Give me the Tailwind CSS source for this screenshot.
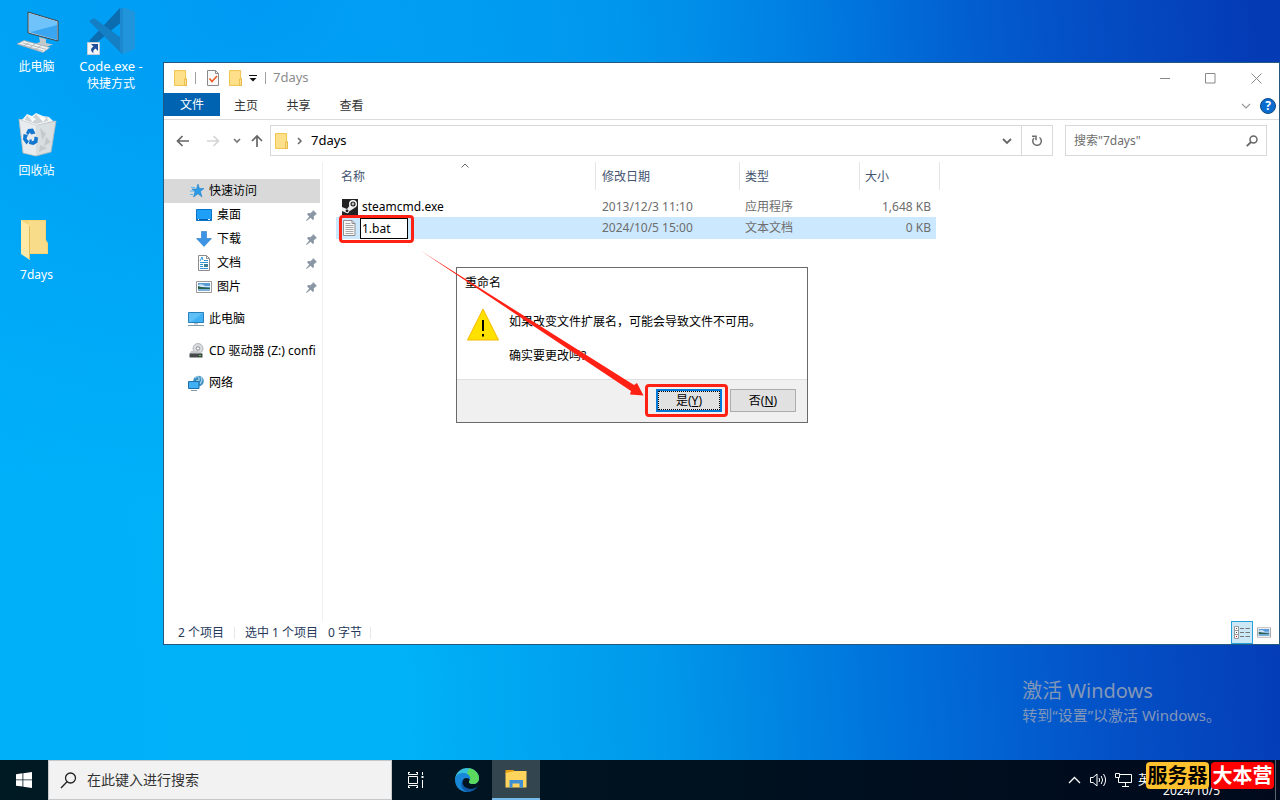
<!DOCTYPE html>
<html lang="zh-CN">
<head>
  <meta charset="UTF-8" />
  <meta name="viewport" content="width=device-width, initial-scale=1.0" />
  <title>7days</title>
  <script src="https://cdn.jsdelivr.net/npm/@tailwindcss/browser@4"></script>
</head>
<body class="font-['Noto_Sans','Noto_Sans_CJK_SC',sans-serif] text-xs text-black">

<!-- shared icons -->
<svg class="hidden">
  <symbol id="folder" viewBox="0 0 14 17">
    <path d="M.5.5h12v9h1v7H.5z" fill="#ffe08a" stroke="#eec043"/>
    <path d="M11.500 9.500h2v7h-2z" fill="#ffe9a8" stroke="#e5b63b"/>
  </symbol>
  <symbol id="pin" viewBox="0 0 11 11">
    <path d="M7 0l4 4-1.200.4-2 2.200.2 2.400-1.200 1L4.600 7.800.6 11 0 10.400 3.200 6.400 1 4.200l1-1.200 2.400.2 2.200-2z" fill="#8a98a5"/>
  </symbol>
  <symbol id="photo" viewBox="0 0 16 12">
    <path d="M.5.5h15v11H.5z" fill="#fff" stroke="#999"/>
    <path d="M2 2h12v8H2z" fill="#5b9bd8"/>
    <path d="M2 4q4-2 7 1h5v1H2z" fill="#cfe6f8"/>
    <path d="M2 5l3 1 9 1v1H2z" fill="#2d5f4c"/>
    <path d="M2 8h12v2H2z" fill="#7fb2d9"/>
  </symbol>
</svg>

<div class="h-screen flex flex-col overflow-hidden">
  <main class="relative flex-1 min-h-0 bg-[radial-gradient(ellipse_at_20%_0%,#0094f2cc_0%,#0094f200_48%),linear-gradient(86deg,#00b0f9_0%,#00b3f8_30%,#0098ea_50%,#0070da_68%,#0450c6_84%,#043bb5_98%)]">

    <!-- desktop icons -->
    <div class="flex text-white text-center leading-[17px]">
      <div class="w-[73px] flex flex-col">
        <a href="#" class="h-[104px] pt-2 flex flex-col items-center">
          <svg class="w-12 h-12" viewBox="0 0 48 48">
            <path d="M15 4l30 9v20l-30-8z" fill="#cfd6da" stroke="#38464f" stroke-width="1"/>
            <path d="M16 5.500l28 8.500v18l-28-8z" fill="#3aa6f2"/>
            <path d="M16 5.500l28 8.500v3L18 24l-2-.5z" fill="#6fc3fa"/>
            <path d="M26 29l7 2v4l7 1.500-7 2.500-11-3 5-2z" fill="#c3c8cb"/>
            <path d="M4 36l7-3.500 26 7-7 5z" fill="#eef1f2" stroke="#9aa3a8" stroke-width=".7"/>
            <path d="M7 36.500l23 6.500M10 35l23 6.300M10 38.500l6-4M16 40l6-4M22 42l6-4.500" stroke="#a8afb3" stroke-width=".8"/>
          </svg>
          <span class="pt-[2px]">此电脑</span>
        </a>
        <a href="#" class="h-[104px] pt-2 flex flex-col items-center">
          <svg class="w-12 h-12" viewBox="0 0 48 48">
            <path d="M6 7l37 2-5 31-15 4-13-3z" fill="#d9dee1"/>
            <path d="M6 7l17 6v31l-13-3z" fill="#e9ecee"/>
            <path d="M6 7l17 6 20-4-5 31-15 4-13-3z" fill="none" stroke="#aeb9bf" stroke-width=".8"/>
            <path d="M9 8l5-6 5 2 4-3 7 3 6 1 4 4-17 4z" fill="#f4f5f6"/>
            <path d="M14 3l4 5 5-6 5 6 6-4 1 5-12 3-11-4z" fill="#cdd2d5"/>
            <path d="M17 4l6 3-4 3zM27 5l6 1-3 4z" fill="#fff"/>
            <path d="M27 16l6 6-4 6zM33 25l5 5-7 4zM27 33l7 3-8 4z" fill="#c4c9cc"/>
            <path d="M13 21l2-4 5-.5 2.500 5-4.500 1-1-2-2 2.500zM10.500 22l4.500 1-1.500 3.500 2.500 3-2.500 3-3.500-5zM16.500 27.500l2.500 0-.5 2 2.500-1 .5-4 3.500 1-.5 5-4 2.500-4.500-1z" fill="#1377d0"/>
          </svg>
          <span class="pt-[2px]">回收站</span>
        </a>
        <a href="#" class="h-[104px] pt-2 flex flex-col items-center">
          <svg class="w-12 h-12" viewBox="0 0 48 48">
            <path d="M8 4h25v20l2 3v11H13z" fill="#f5d273"/>
            <path d="M15 5h17v19l2 3v10H15z" fill="#f8dc89"/>
            <path d="M8 4l9 6v34l-9-6z" fill="#ffe9a6"/>
            <path d="M16.500 10v33" stroke="#e4bd5a"/>
          </svg>
          <span class="pt-[2px]">7days</span>
        </a>
      </div>
      <a href="#" class="w-[76px] pt-2 flex flex-col items-center">
        <svg class="w-12 h-12" viewBox="0 0 48 48">
          <path d="M2 33l31-33 4 12L8 36z" fill="#0b6cb0"/>
          <path d="M2 13l5-3 30 22-2 14z" fill="#147fc4"/>
          <path d="M36 -1l12 5v37l-12 5z" fill="#2095dc"/>
          <path d="M33 2l3-3v47l-3-3z" fill="#1b88cf"/>
          <path d="M.5 34.500h12v12H.500z" fill="#f4f6fa" stroke="#c5ccd6"/>
          <path d="M4 36h7v7L8.500 40.500Q5.500 42 6.500 45.500 1.500 41.500 6.500 38.500z" fill="#1f4f9a"/>
        </svg>
        <span class="pt-[2px] text-[13px]">Code.exe -</span>
        <span>快捷方式</span>
      </a>
    </div>

    <p class="absolute right-[59px] bottom-[35px] text-[#8297b8]">
      <span class="block text-xl leading-7">激活 Windows</span>
      <span class="block text-[15px] leading-5">转到“设置”以激活 Windows。</span>
    </p>

    <!-- explorer window -->
    <section class="absolute left-[163px] right-0 top-[62px] bottom-[115px] flex flex-col bg-white border border-[#24597f]">
      <div class="h-[30px] shrink-0 flex items-center pl-[10px] text-[#8c8c8c]">
        <svg class="w-[13px] h-4"><use href="#folder"/></svg>
        <i class="ml-2 w-px h-3 bg-[#a0a0a0]"></i>
        <svg class="ml-[11px] w-3 h-4" viewBox="0 0 12 16">
          <path d="M.5.500h8l3 3v12H.5z" fill="#fafafa" stroke="#8a8a8a"/>
          <path d="M8.500.500v3h3" fill="none" stroke="#8a8a8a"/>
          <path d="M2.500 8.500l2.500 3 5-5.500" fill="none" stroke="#ee5a24" stroke-width="1.600"/>
        </svg>
        <svg class="ml-[10px] w-[13px] h-4"><use href="#folder"/></svg>
        <svg class="ml-[7px] w-2 h-2" viewBox="0 0 8 8"><path d="M0 1.500h8" stroke="#111"/><path d="M.5 4h7L4 7.500z" fill="#111"/></svg>
        <i class="ml-2 w-px h-3 bg-[#a0a0a0]"></i>
        <span class="ml-[7px] text-[13px]">7days</span>
        <div class="ml-auto flex">
          <button aria-label="最小化" class="w-[46px] h-7 grid place-items-center"><svg class="w-[11px] h-[11px]" viewBox="0 0 11 11"><path d="M0 5.500h10" stroke="#888"/></svg></button>
          <button aria-label="最大化" class="w-[45px] h-7 grid place-items-center"><svg class="w-[11px] h-[11px]" viewBox="0 0 11 11"><path d="M.5.500h9.500v9.500H.5z" fill="none" stroke="#888"/></svg></button>
          <button aria-label="关闭" class="w-[46px] h-7 grid place-items-center"><svg class="w-[11px] h-[11px]" viewBox="0 0 11 11"><path d="M.5.500l10 10M10.500.500l-10 10" stroke="#888"/></svg></button>
        </div>
      </div>

      <nav class="h-[27px] shrink-0 flex items-start border-b border-[#dadbdc] leading-[25px] text-[#333]">
        <a href="#" class="w-14 bg-[#0063b1] text-white text-center leading-[23px]">文件</a>
        <a href="#" class="w-[52px] text-center">主页</a>
        <a href="#" class="w-[53px] text-center">共享</a>
        <a href="#" class="w-[53px] text-center">查看</a>
        <div class="ml-auto pt-[5px] pr-[3px] flex items-center gap-[9px]">
          <svg class="w-[10px] h-2" viewBox="0 0 10 8"><path d="M1 2l4 4 4-4" fill="none" stroke="#999" stroke-width="1.200"/></svg>
          <button aria-label="帮助" class="w-4 h-4 rounded-full border border-[#0b4a87] bg-[#0a6cce] text-white font-bold leading-[14px]">?</button>
        </div>
      </nav>

      <div class="h-[41px] shrink-0 flex items-center pl-3 pr-3">
        <svg class="w-[14px] h-3" viewBox="0 0 14 12"><path d="M1.500 6H13M6.500 1l-5 5 5 5" fill="none" stroke="#666" stroke-width="1.700"/></svg>
        <svg class="ml-4 w-[14px] h-3" viewBox="0 0 14 12"><path d="M1 6h11.500M7.500 1l5 5-5 5" fill="none" stroke="#d5d5d5" stroke-width="1.700"/></svg>
        <svg class="ml-[13px] w-2 h-2" viewBox="0 0 8 8"><path d="M1 2l3 3 3-3" fill="none" stroke="#777" stroke-width="1.700"/></svg>
        <svg class="ml-[10px] w-3 h-[14px]" viewBox="0 0 12 14"><path d="M6 13V2M1 7l5-5 5 5" fill="none" stroke="#666" stroke-width="1.700"/></svg>
        <div class="ml-[7px] h-[31px] flex-1 flex items-center border border-[#d9d9d9] pl-1">
          <svg class="w-[13px] h-4"><use href="#folder"/></svg>
          <svg class="ml-[9px] w-[6px] h-2" viewBox="0 0 6 8"><path d="M1 1l3 3-3 3" fill="none" stroke="#666" stroke-width="1.500"/></svg>
          <span class="ml-2 text-[13px]">7days</span>
          <svg class="ml-auto mr-[9px] w-[10px] h-2" viewBox="0 0 10 8"><path d="M1 2l4 4 4-4" fill="none" stroke="#666" stroke-width="1.800"/></svg>
          <button aria-label="刷新" class="w-[31px] h-full border-l border-[#d9d9d9] grid place-items-center">
            <svg class="w-3 h-3" viewBox="0 0 12 12"><path d="M8.500 2.500a4.300 4.300 0 1 1-5.500.5M1 1.200h4v4" fill="none" stroke="#6b6b6b" stroke-width="1.500"/></svg>
          </button>
        </div>
        <label class="ml-3 h-[31px] w-[202px] flex items-center border border-[#d9d9d9] px-2">
          <input type="text" aria-label="搜索" placeholder="搜索&quot;7days&quot;" class="flex-1 min-w-0 outline-none placeholder:text-[#6d6d6d]" />
          <svg class="w-3 h-3" viewBox="0 0 12 12"><circle cx="7.500" cy="4.500" r="3.500" fill="none" stroke="#666" stroke-width="1.500"/><path d="M5 7L.8 11.200" stroke="#666" stroke-width="1.800"/></svg>
        </label>
      </div>

      <div class="flex-1 min-h-0 flex pt-px">
        <!-- navigation pane -->
        <aside class="w-[159px] shrink-0 border-r border-[#f0f0f0] pt-[17px] pr-[2px] leading-6 whitespace-nowrap">
          <a href="#" class="h-6 pl-[26px] flex items-center gap-[5px] bg-[#d9d9d9]">
            <svg class="w-[14px] h-[14px]" viewBox="0 0 14 14"><path d="M8 0l1.500 4.500H14l-3.600 3L12 13 8 9.800 3.500 13 5 7.800 2 5h4.500z" fill="#2b9be6" stroke="#1878c0" stroke-width=".5"/><path d="M1 3.500h4M0 7h4M0 10.500h3" stroke="#5fb8f2"/></svg>
            快速访问
          </a>
          <a href="#" class="h-6 pl-8 pr-[3px] flex items-center gap-[5px]">
            <svg class="w-4 h-4" viewBox="0 0 16 16"><path d="M.5 2.500h15v11H.5z" fill="#1fa0f8" stroke="#0b72c8"/><path d="M1 12.500h14" stroke="#045fae"/><path d="M2 12.500h1M12 12.500h2" stroke="#fff"/></svg>
            桌面
            <svg class="ml-auto w-[11px] h-[11px]"><use href="#pin"/></svg>
          </a>
          <a href="#" class="h-6 pl-8 pr-[3px] flex items-center gap-[5px]">
            <svg class="w-4 h-4" viewBox="0 0 16 16"><path d="M5.500.500h5v7h5L8 15.500.500 7.500h5z" fill="#3d94e4" stroke="#2a7ac8" stroke-width=".6"/></svg>
            下载
            <svg class="ml-auto w-[11px] h-[11px]"><use href="#pin"/></svg>
          </a>
          <a href="#" class="h-6 pl-8 pr-[3px] flex items-center gap-[5px]">
            <svg class="w-4 h-4" viewBox="0 0 16 16"><path d="M2.500.500h8l3 3v12h-11z" fill="#fff" stroke="#8c8c8c"/><path d="M10.500.500v3h3" fill="none" stroke="#8c8c8c"/><path d="M8 5.500h4M4 7.500h8M4 9.500h3M4 11.500h3M4 13.500h8" stroke="#2f95d8"/><path d="M4 6l2-4 1 3" stroke="#2f95d8" fill="none"/><path d="M8 9h4v3H8z" fill="#3a7f95"/></svg>
            文档
            <svg class="ml-auto w-[11px] h-[11px]"><use href="#pin"/></svg>
          </a>
          <a href="#" class="h-6 pl-8 pr-[3px] flex items-center gap-[5px]">
            <svg class="w-4 h-3"><use href="#photo"/></svg>
            图片
            <svg class="ml-auto w-[11px] h-[11px]"><use href="#pin"/></svg>
          </a>
          <a href="#" class="mt-2 h-6 pl-6 flex items-center gap-[5px]">
            <svg class="w-4 h-4" viewBox="0 0 16 16"><path d="M.5 1.500h15v10H.5z" fill="#3fb0f4" stroke="#2a7fb8"/><path d="M1 2h14L3 11H1z" fill="#5fc0f8"/><path d="M6 12h4v1.500H6z" fill="#b5c3cc"/><path d="M0 14.500h16" stroke="#7f98aa"/></svg>
            此电脑
          </a>
          <a href="#" class="mt-2 h-6 pl-6 flex items-center gap-[5px] overflow-hidden">
            <svg class="w-4 h-4 shrink-0" viewBox="0 0 16 16"><circle cx="10" cy="5.500" r="5" fill="#d8dcde" stroke="#a5a9ab" stroke-width=".8"/><circle cx="10" cy="5.500" r="1.700" fill="#fff" stroke="#8b8f91"/><path d="M3 8h7l4 2v1H1.500z" fill="#c4c7c9"/><path d="M1.500 10.500h13v4h-13z" fill="#45494b"/><path d="M11 12.500h2" stroke="#4fd24a"/></svg>
            <span>CD 驱动器 (Z:) confi</span>
          </a>
          <a href="#" class="mt-2 h-6 pl-6 flex items-center gap-[5px]">
            <svg class="w-4 h-4" viewBox="0 0 16 16"><circle cx="10.500" cy="6" r="5.300" fill="#3b8fc0"/><path d="M7 3q3-3 4 0t-3 3M13 2l1 3-2 4" stroke="#a9d6ea" fill="none" stroke-width="1.200"/><path d="M.5 6.500h10.500v7H.500z" fill="#3fb0f4" stroke="#1f6fa8"/><path d="M3 15.500h6" stroke="#7f98aa"/></svg>
            网络
          </a>
        </aside>

        <!-- file list -->
        <div class="relative flex-1 pl-[13px]">
          <svg class="absolute left-[138px] top-px w-2 h-[5px]" viewBox="0 0 8 5"><path d="M.5 4.500L4 1l3.500 3.500" fill="none" stroke="#666"/></svg>
          <table class="w-[604px] table-fixed border-separate border-spacing-0 text-[#6d6d6d]">
            <thead>
              <tr class="h-7 text-left text-[#44546f]">
                <th class="w-[260px] p-0 pt-[2px] pl-[5px] font-normal border-r border-[#e5e5e5]">名称</th>
                <th class="w-36 p-0 pt-[2px] pl-[6px] font-normal border-r border-[#e5e5e5]">修改日期</th>
                <th class="w-[120px] p-0 pt-[2px] pl-[5px] font-normal border-r border-[#e5e5e5]">类型</th>
                <th class="w-20 p-0 pt-[2px] pl-[5px] font-normal border-r border-[#e5e5e5]">大小</th>
              </tr>
            </thead>
            <tbody>
              <tr class="h-[6px]"><td colspan="4"></td></tr>
              <tr class="h-[21px]">
                <td class="p-0 pl-[6px] text-black">
                  <div class="flex items-center gap-1">
                    <svg class="w-4 h-4" viewBox="0 0 16 16"><path d="M0 0h16v16H0z" fill="#222"/><circle cx="11" cy="5" r="3.300" fill="none" stroke="#fff" stroke-width="1.400"/><circle cx="11" cy="5" r="1.400" fill="#bbb"/><path d="M0 8l5 2 3-4 4.500 3-5.500 3.500Q7 15 4.500 14L0 12z" fill="#eee"/><circle cx="5" cy="11.800" r="1.400" fill="#222"/></svg>
                    steamcmd.exe
                  </div>
                </td>
                <td class="p-0 pl-[6px]">2013/12/3 11:10</td>
                <td class="p-0 pl-[5px]">应用程序</td>
                <td class="p-0 pr-[5px] text-right border-r-4 border-white">1,648 KB</td>
              </tr>
              <tr class="h-[22px] bg-[#cce8ff]">
                <td class="p-0 pl-[7px]">
                  <div class="flex items-center gap-1">
                    <svg class="w-[13px] h-4" viewBox="0 0 13 16"><path d="M.5.500h8.500l3 3v12H.5z" fill="#f7f7f7" stroke="#8f8f8f"/><path d="M9 .5v3h3" fill="none" stroke="#8f8f8f"/><path d="M2.500 3.500h5M2.500 5.500h8M2.500 7.500h8M2.500 9.500h8M2.500 11.500h8M2.500 13.500h8" stroke="#a9a9a9"/></svg>
                    <input type="text" aria-label="文件名" value="1.bat" class="w-12 h-[21px] pl-px bg-white border border-black text-black outline-none" />
                  </div>
                </td>
                <td class="p-0 pl-[6px]">2024/10/5 15:00</td>
                <td class="p-0 pl-[5px]">文本文档</td>
                <td class="p-0 pr-[5px] text-right border-r-4 border-white">0 KB</td>
              </tr>
            </tbody>
          </table>
        </div>
      </div>

      <footer class="h-[23px] shrink-0 flex items-center pl-[14px] pr-2 text-[#26395b]">
        <span>2 个项目</span>
        <i class="mx-[10px] w-px h-3 bg-[#e8e8e8]"></i>
        <span>选中 1 个项目</span>
        <span class="ml-[10px]">0 字节</span>
        <i class="ml-2 w-px h-3 bg-[#e8e8e8]"></i>
        <button aria-label="详细信息" class="ml-auto w-[22px] h-[23px] border border-[#26a0da] bg-[#cbe8f6] grid place-items-center">
          <svg class="w-4 h-[13px]" viewBox="0 0 16 13"><path d="M.5.500h4v12h-4zM.5 4.500h4M.5 8.500h4" fill="#fff" stroke="#999"/><path d="M2 2.500h1M2 6.500h1" stroke="#555"/><path d="M2 10.500h1" stroke="#c00"/><path d="M6 2.500h4M11.500 2.500H16M6 6.500h4M11.500 6.500H16M6 10.500h4M11.500 10.500H16" stroke="#777"/></svg>
        </button>
        <button aria-label="大图标" class="ml-1"><svg class="w-[14px] h-[11px]" viewBox="0 0 16 12"><use href="#photo"/></svg></button>
      </footer>
    </section>

    <!-- rename dialog -->
    <section role="dialog" class="absolute left-[456px] top-[267px] w-[352px] flex flex-col bg-white border border-[#6a6a6a]">
      <h1 class="h-[30px] pl-2 leading-[30px]">重命名</h1>
      <div class="h-[81px] pl-[10px] pt-[10px] flex gap-[10px]">
        <svg class="w-8 h-[33px]" viewBox="0 0 32 33"><path d="M16 1l15.500 31H.5z" fill="#ffe100" stroke="#f6b800"/><path d="M15 12h2v11h-2zM15 26h2v2.500h-2z" fill="#000"/></svg>
        <div class="pt-[5px] leading-[17px]">
          <p>如果改变文件扩展名，可能会导致文件不可用。</p>
          <p class="mt-[17px]">确实要更改吗?</p>
        </div>
      </div>
      <div class="h-[43px] flex justify-end gap-2 pt-[9px] pr-[11px] bg-[#f0f0f0] border-t border-[#dfdfdf]">
        <button class="w-[66px] h-[23px] border-2 border-[#0078d7] bg-[#e1e1e1]"><span class="block h-full border border-dotted border-black leading-[17px]">是(<u>Y</u>)</span></button>
        <button class="w-[66px] h-[23px] border border-[#adadad] bg-[#e1e1e1] leading-[21px]">否(<u>N</u>)</button>
      </div>
    </section>

    <!-- red markers -->
    <div class="absolute left-[339px] top-[215px] w-[75px] h-[28px] border-3 border-[#ff2114] rounded-sm"></div>
    <div class="absolute left-[645px] top-[384px] w-[83px] h-[33px] border-3 border-[#ff2114] rounded-sm"></div>
    <svg class="absolute left-[420px] top-[250px] w-[225px] h-[147px]" viewBox="0 0 225 147"><path d="M1 1L214 135 217 133 223.500 145.500 210 144.500 211 141z" fill="#ff2114"/></svg>
  </main>

  <!-- taskbar -->
  <footer class="relative h-10 shrink-0 flex bg-linear-to-r from-[#001a24] to-[#000a1c] text-white">
    <button aria-label="开始" class="w-12 grid place-items-center">
      <svg class="w-4 h-4" viewBox="0 0 16 16"><path d="M0 2.300L6.500 1.300v6.200H0zM7.300 1.200L16 0v7.500H7.300zM0 8.300h6.500v6.300L0 13.700zM7.300 8.300H16V16l-8.700-1.200z" fill="#fff"/></svg>
    </button>
    <label class="w-[344px] flex items-center gap-[10px] pl-[11px] bg-[#f2f2f2] border border-[#c4c8ca]">
      <svg class="w-[17px] h-[17px]" viewBox="0 0 17 17"><circle cx="10.500" cy="6" r="5" fill="none" stroke="#222" stroke-width="1.300"/><path d="M7 9.700L1 16" stroke="#222" stroke-width="1.300"/></svg>
      <input type="text" aria-label="搜索" placeholder="在此键入进行搜索" class="flex-1 min-w-0 text-sm outline-none placeholder:text-[#333]" />
    </label>
    <button aria-label="任务视图" class="w-12 grid place-items-center">
      <svg class="w-4 h-4" viewBox="0 0 16 16"><path d="M0 .5h2M8 .5h2M0 15.500h2M8 15.500h2M.5.500v2h9v-2M.5 15.500v-2h9v2M.5 4.500h9v7h-9zM14.500 0v3M14.500 8v8" fill="none" stroke="#fff"/><path d="M13.500 4h2v2h-2z" fill="#fff"/></svg>
    </button>
    <button aria-label="Edge" class="w-[54px] grid place-items-center">
      <svg class="w-6 h-6" viewBox="0 0 24 24">
        <path d="M0 11C1 4 6 0 12 0c7 0 12 5 12 10 0 4-3 6-6 6-3 0-4.500-1-4-2.500 2-2 .5-5.500-3-5.500z" fill="#36c0dc"/>
        <path d="M14 .2C20 1 24 5.500 24 10c0 4-3 6-6 6-3 0-4.500-1-4-2.500 2-2 1-6-2-8z" fill="#5bd75e"/>
        <path d="M0 12C0 7 5 4.500 9 5c5 .5 7 4 6 7-1-2-5-3-7 0-3 5 1 11 6 12C6 25 0 19 0 12z" fill="#1787d8"/>
        <path d="M8 12c-2 5 3 9 8 9 3 0 5-1 6.500-3C21 21.500 17 24 13 24 7 23 4 16 8 12z" fill="#0e59a8"/>
      </svg>
    </button>
    <button aria-label="文件资源管理器" class="-ml-[2px] w-12 bg-[#33454f] border-b-2 border-[#76b9ed] grid place-items-center">
      <svg class="w-[22px] h-[18px]" viewBox="0 0 22 18"><path d="M.5 0h8l1.500 2v2H.5z" fill="#e9a013"/><path d="M.5 3L10 1h11.500v16.500H.5z" fill="#ffd45c"/><path d="M4.500 17.500V10H18v7.500h-3.500v-4h-7v4z" fill="#3f8fd6"/></svg>
    </button>

    <div class="ml-auto flex items-center pr-[60px]">
      <svg class="w-[13px] h-2" viewBox="0 0 13 8"><path d="M1 7l5.500-5.500L12 7" fill="none" stroke="#fff" stroke-width="1.300"/></svg>
      <svg class="ml-[9px] w-[17px] h-[14px]" viewBox="0 0 17 14"><path d="M.5 4.500h2.500l4-3.500v12l-4-3.500H.5z" fill="none" stroke="#fff"/><path d="M9 5q1.300 2 0 4M11.200 3q2.800 4 0 8M13.500 1q4.200 6 0 12" fill="none" stroke="#fff"/></svg>
      <svg class="ml-2 w-[17px] h-[14px]" viewBox="0 0 17 14"><path d="M5 1.500h11.500v8H3.500V5M.5.500h4v4h-4zM10.500 10v3M7 13.500h7" fill="none" stroke="#fff"/></svg>
      <span class="ml-[6px] text-[13px]">英</span>
      <span class="ml-3 self-end leading-[19px]">2024/10/5</span>
    </div>
    <i class="absolute right-1 inset-y-0 w-px bg-[#5a626c]"></i>
    <div class="absolute right-[6px] top-[2px] flex gap-[2px] text-xl font-bold leading-[27px] text-center">
      <span class="w-[63px] rounded bg-[#ffc22e] text-black">服务器</span>
      <span class="w-[63px] rounded bg-[#ff0000] text-white">大本营</span>
    </div>
  </footer>
</div>

</body>
</html>
